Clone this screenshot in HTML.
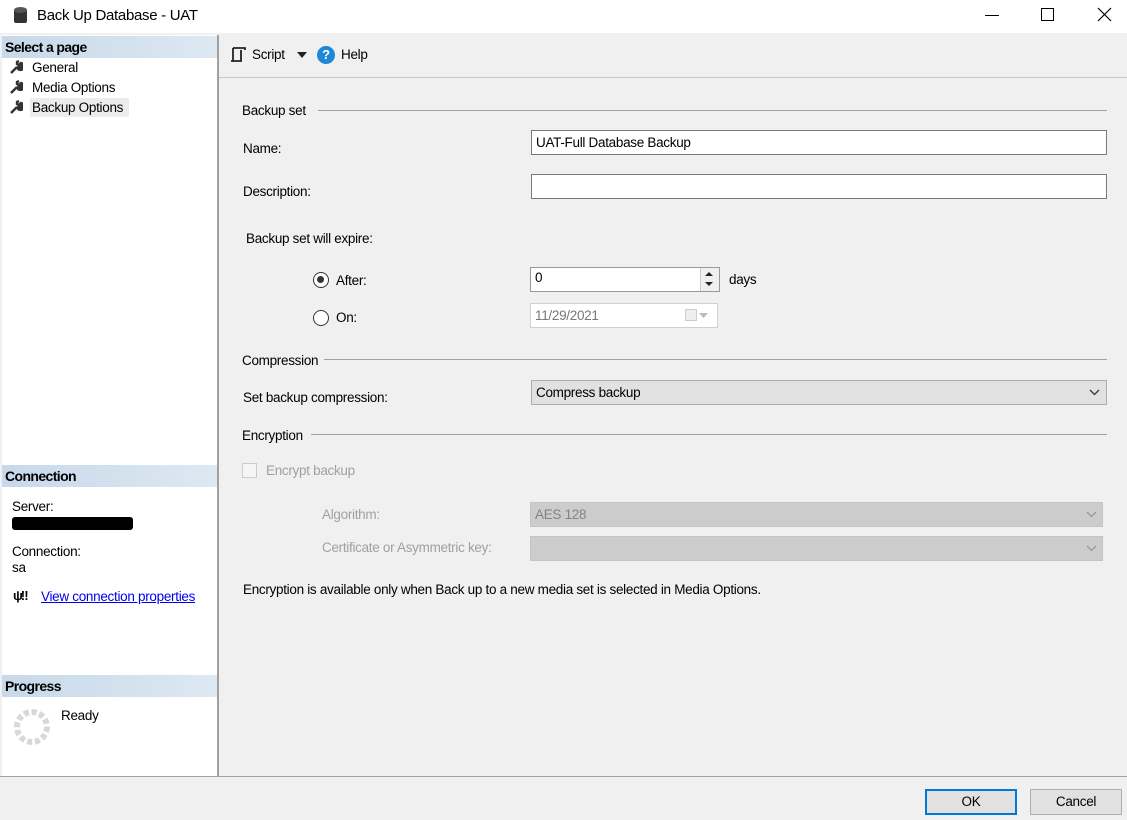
<!DOCTYPE html>
<html><head><style>
*{margin:0;padding:0;box-sizing:border-box}
body{width:1127px;height:820px;background:#f0f0f0;font-family:"Liberation Sans",Arial,sans-serif;font-size:13.5px;color:#000;position:relative;overflow:hidden;letter-spacing:-0.3px}
.a{position:absolute}
.hdr{position:absolute;left:2px;width:215px;height:22px;background:linear-gradient(90deg,#c7d9ea,#dde8f2);font-weight:bold;font-size:14px;padding:3px 3px;letter-spacing:-0.6px}
.line{position:absolute;height:1px;background:#a0a0a0}
.inp{position:absolute;background:#fff;border:1px solid #7a7a7a;padding:4px 4px 0}
.dis{color:#a0a0a0}
</style></head><body>
<div class="a" style="left:0;top:0;width:1127px;height:33px;background:#fff"></div>
<svg class="a" style="left:13px;top:6px" width="16" height="20"><rect x="1" y="3" width="13" height="14" rx="2" fill="#333"/><ellipse cx="7.5" cy="4" rx="6.5" ry="3" fill="#555"/></svg>
<div class="a" style="left:37px;top:7px;font-size:15px">Back Up Database - UAT</div>
<div class="a" style="left:985px;top:15px;width:14px;height:1px;background:#000"></div>
<div class="a" style="left:1041px;top:8px;width:13px;height:13px;border:1px solid #000"></div>
<svg class="a" style="left:1097px;top:7px" width="15" height="15"><path d="M1 1L14 14M14 1L1 14" stroke="#000" stroke-width="1.2"/></svg>

<div class="a" style="left:2px;top:35px;width:215px;height:741px;background:#fff"></div>
<div class="a" style="left:217px;top:35px;width:2px;height:741px;background:#a0a0a0"></div>
<div class="hdr" style="top:36px">Select a page</div>
<svg class="a" style="left:9px;top:60px" width="14" height="14"><path d="M2 13L8 7M8 7A3.5 3.5 0 1 0 12 3L10 5 8 4 8 2 10 1" stroke="#333" stroke-width="2.4" fill="#333"/></svg>
<div class="a" style="left:32px;top:60px">General</div>
<svg class="a" style="left:9px;top:80px" width="14" height="14"><path d="M2 13L8 7M8 7A3.5 3.5 0 1 0 12 3L10 5 8 4 8 2 10 1" stroke="#333" stroke-width="2.4" fill="#333"/></svg>
<div class="a" style="left:32px;top:80px">Media Options</div>
<svg class="a" style="left:9px;top:100px" width="14" height="14"><path d="M2 13L8 7M8 7A3.5 3.5 0 1 0 12 3L10 5 8 4 8 2 10 1" stroke="#333" stroke-width="2.4" fill="#333"/></svg>
<div class="a" style="left:30px;top:98px;width:99px;height:19px;background:#ececec"></div>
<div class="a" style="left:32px;top:100px">Backup Options</div>

<div class="hdr" style="top:465px">Connection</div>
<div class="a" style="left:12px;top:499px">Server:</div>
<div class="a" style="left:12px;top:517px;width:121px;height:13px;background:#000;border-radius:3px"></div>
<div class="a" style="left:12px;top:544px">Connection:</div>
<div class="a" style="left:12px;top:560px">sa</div>
<div class="a" style="left:13px;top:588px;font-size:13px;font-weight:bold;letter-spacing:-2px">ψ‼</div>
<div class="a" style="left:41px;top:589px;color:#0000ee;text-decoration:underline">View connection properties</div>
<div class="hdr" style="top:675px">Progress</div>
<svg class="a" style="left:12px;top:707px" width="40" height="40"><circle cx="20" cy="20" r="15" fill="none" stroke="#d8d8d8" stroke-width="6" stroke-dasharray="5 2.8"/></svg>
<div class="a" style="left:61px;top:708px">Ready</div>

<div class="line" style="left:219px;top:77px;width:908px;background:#c8c8c8"></div>
<svg class="a" style="left:229px;top:46px" width="18" height="18"><path d="M4 2H16V4M4 2V15H2M4 15H12V4" stroke="#222" stroke-width="1.8" fill="none"/></svg>
<div class="a" style="left:252px;top:47px">Script</div>
<svg class="a" style="left:297px;top:52px" width="10" height="6"><path d="M0 0H10L5 6Z" fill="#222"/></svg>
<div class="a" style="left:317px;top:46px;width:18px;height:18px;border-radius:50%;background:#1e88d8;color:#fff;font-weight:bold;font-size:13px;text-align:center;line-height:18px">?</div>
<div class="a" style="left:341px;top:47px">Help</div>

<div class="a" style="left:242px;top:103px">Backup set</div>
<div class="line" style="left:318px;top:110px;width:789px"></div>
<div class="a" style="left:243px;top:141px">Name:</div>
<div class="inp" style="left:531px;top:130px;width:576px;height:25px">UAT-Full Database Backup</div>
<div class="a" style="left:243px;top:184px">Description:</div>
<div class="inp" style="left:531px;top:174px;width:576px;height:25px"></div>
<div class="a" style="left:246px;top:231px">Backup set will expire:</div>
<div class="a" style="left:313px;top:272px;width:16px;height:16px;border:1.5px solid #333;border-radius:50%;background:#fff"><div style="margin:3px;width:7px;height:7px;border-radius:50%;background:#333"></div></div>
<div class="a" style="left:336px;top:273px">After:</div>
<div class="inp" style="left:530px;top:267px;width:190px;height:25px;border-color:#999;padding-top:2px">0</div>
<div class="a" style="left:700px;top:268px;width:19px;height:23px;border-left:1px solid #ccc;background:#f0f0f0"></div>
<svg class="a" style="left:704px;top:270px" width="10" height="18"><path d="M1 6H9L5 2ZM1 12H9L5 16Z" fill="#222"/></svg>
<div class="a" style="left:729px;top:272px">days</div>
<div class="a" style="left:313px;top:310px;width:16px;height:16px;border:1.5px solid #333;border-radius:50%;background:#fff"></div>
<div class="a" style="left:336px;top:310px">On:</div>
<div class="inp" style="left:530px;top:303px;width:188px;height:25px;border-color:#d0d0d0;color:#777">11/29/2021</div>
<div class="a" style="left:685px;top:309px;width:12px;height:12px;border:1px solid #ccc;background:#eee"></div>
<svg class="a" style="left:699px;top:313px" width="9" height="5"><path d="M0 0H9L4.5 5Z" fill="#bbb"/></svg>

<div class="a" style="left:242px;top:353px">Compression</div>
<div class="line" style="left:324px;top:359px;width:783px"></div>
<div class="a" style="left:243px;top:390px">Set backup compression:</div>
<div class="a" style="left:531px;top:380px;width:576px;height:25px;background:#e1e1e1;border:1px solid #adadad;padding:4px 4px 0">Compress backup</div>
<svg class="a" style="left:1089px;top:389px" width="11" height="7"><path d="M1 1L5.5 5.5 10 1" stroke="#333" fill="none" stroke-width="1.3"/></svg>
<div class="a" style="left:242px;top:428px">Encryption</div>
<div class="line" style="left:311px;top:434px;width:796px"></div>
<div class="a" style="left:242px;top:463px;width:15px;height:15px;border:1px solid #ccc;background:#f5f5f5"></div>
<div class="a dis" style="left:266px;top:463px">Encrypt backup</div>
<div class="a dis" style="left:322px;top:507px">Algorithm:</div>
<div class="a" style="left:530px;top:502px;width:573px;height:25px;background:#ccc;border:1px solid #c4c4c4;padding:4px 4px 0;color:#838383">AES 128</div>
<svg class="a" style="left:1086px;top:511px" width="11" height="7"><path d="M1 1L5.5 5.5 10 1" stroke="#999" fill="none" stroke-width="1.3"/></svg>
<div class="a dis" style="left:322px;top:540px">Certificate or Asymmetric key:</div>
<div class="a" style="left:530px;top:536px;width:573px;height:25px;background:#ccc;border:1px solid #c4c4c4"></div>
<svg class="a" style="left:1086px;top:545px" width="11" height="7"><path d="M1 1L5.5 5.5 10 1" stroke="#999" fill="none" stroke-width="1.3"/></svg>
<div class="a" style="left:243px;top:582px">Encryption is available only when Back up to a new media set is selected in Media Options.</div>

<div class="line" style="left:0;top:776px;width:1127px;background:#a0a0a0"></div>
<div class="a" style="left:925px;top:789px;width:92px;height:26px;border:2px solid #0078d7;background:#e1e1e1;text-align:center;line-height:22px">OK</div>
<div class="a" style="left:1030px;top:789px;width:92px;height:26px;border:1px solid #adadad;background:#e1e1e1;text-align:center;line-height:24px">Cancel</div>
</body></html>
